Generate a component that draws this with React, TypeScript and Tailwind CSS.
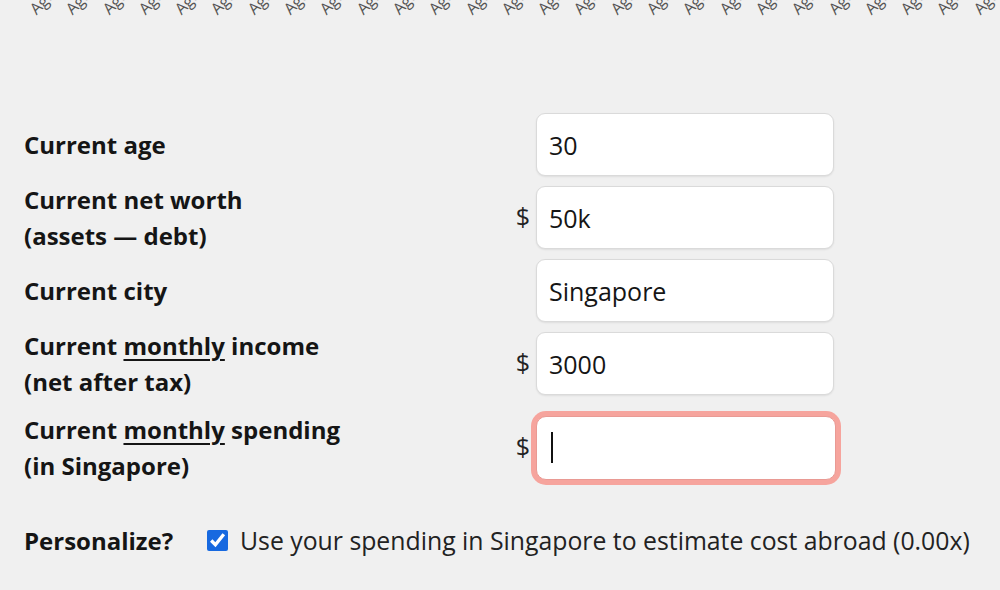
import { useState } from "react";

const FONT = { fontFamily: "'Open Sans', 'Noto Sans', sans-serif" };

// rotated tick labels from the chart above, only the tail is visible
function TickStrip() {
  const ticks = Array.from({ length: 27 });
  return (
    <div className="h-[20px] overflow-hidden flex pl-[38px]">
      {ticks.map((_, i) => (
        <div key={i} className="w-[36.3px] shrink-0 h-full flex items-end">
          <span className="block origin-bottom-left -rotate-45 translate-y-[-3px] text-[16px] leading-none text-[#555] whitespace-nowrap">
            Age
          </span>
        </div>
      ))}
    </div>
  );
}

function Row({
  label,
  sub,
  dollar,
  children,
  className = "",
}: {
  label: React.ReactNode;
  sub?: string;
  dollar?: boolean;
  children: React.ReactNode;
  className?: string;
}) {
  return (
    <div className={`flex items-center h-[63px] ${className}`}>
      <div className="w-[486px] shrink-0 text-[24px] font-bold leading-[36px] text-[#151515]">
        <div>{label}</div>
        {sub && <div>{sub}</div>}
      </div>
      <div className="w-[26px] shrink-0 text-right pr-[6px] text-[25px] text-[#222] pb-[2px]">{dollar ? "$" : ""}</div>
      {children}
    </div>
  );
}

function Field({ value }: { value: string }) {
  const [v, setV] = useState(value);
  return (
    <input
      value={v}
      onChange={(e) => setV(e.target.value)}
      className="w-[298px] h-[63px] rounded-[9px] bg-white border border-[#dadada] shadow-[0_1px_2px_rgba(0,0,0,0.08)] px-[12px] text-[25px] text-[#151515] outline-none"
      style={FONT}
    />
  );
}

export default function App() {
  const [checked, setChecked] = useState(true);
  return (
    <div className="w-[1000px] h-[590px] bg-[#f0f0f0] overflow-hidden" style={FONT}>
      <TickStrip />

      <div className="pl-[24px] mt-[93px] flex flex-col gap-[10px]">
        <Row label="Current age">
          <Field value="30" />
        </Row>
        <Row label="Current net worth" sub="(assets — debt)" dollar>
          <Field value="50k" />
        </Row>
        <Row label="Current city">
          <Field value="Singapore" />
        </Row>
        <Row
          label={
            <>
              Current <span className="underline underline-offset-[4px] decoration-[2px]">monthly</span> income
            </>
          }
          sub="(net after tax)"
          dollar
        >
          <Field value="3000" />
        </Row>
        <Row
          className="mt-[11px]"
          label={
            <>
              Current <span className="underline underline-offset-[4px] decoration-[2px]">monthly</span> spending
            </>
          }
          sub="(in Singapore)"
          dollar
        >
          <div className="relative">
            <input
              className="w-[300px] h-[64px] rounded-[10px] bg-white border border-[#e99a94] ring-[5px] ring-[#f6a49d] px-[14px] text-[25px] outline-none"
              style={FONT}
            />
            <span className="absolute left-[15px] top-[16px] w-[2px] h-[31px] bg-[#111] pointer-events-none" />
          </div>
        </Row>
      </div>

      <div className="pl-[24px] mt-[43px] flex items-center">
        <div className="w-[183px] shrink-0 text-[24px] font-bold text-[#151515]">Personalize?</div>
        <label className="flex items-center gap-[12px] text-[24.8px] text-[#222]">
          <input
            type="checkbox"
            checked={checked}
            onChange={(e) => setChecked(e.target.checked)}
            className="w-[21px] h-[21px] accent-[#1769e0] m-0"
          />
          <span className="whitespace-nowrap">Use your spending in Singapore to estimate cost abroad (0.00x)</span>
        </label>
      </div>
    </div>
  );
}
